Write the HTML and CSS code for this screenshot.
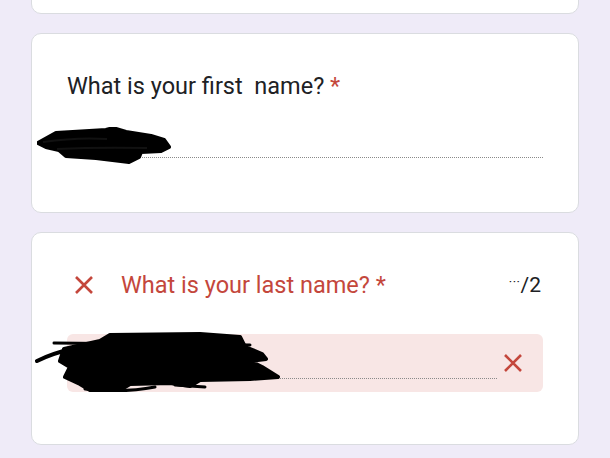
FILE: index.html
```html
<!DOCTYPE html>
<html lang="en">
<head>
  <meta charset="UTF-8" />
  <meta name="viewport" content="width=device-width, initial-scale=1.0" />
  <title>Form</title>
  <link rel="stylesheet" href="styles.css">
</head>

<body>

  <div class="form">
    <div class="card card-cut"></div>

    <div class="card">
      <div class="question">
        <h2>What is your first&nbsp; name? <span class="req">*</span></h2>
      </div>
      <div class="answer">
        <div class="line"></div>
      </div>
      <svg class="scribble scribble-first" width="136" height="38" viewBox="0 0 136 38">
        <path d="M1 16 L19 6 L69 3 L76 1 L89 5 L114 9 L127 13 L132 20 L124 24 L104 25 L102 30 L92 35 L59 31 L29 29 L22 23 L9 20 Z" fill="#000" stroke="#000" stroke-width="4" stroke-linejoin="round"/>
        <path d="M6 15 Q40 10 70 12 M20 22 Q60 20 110 21" stroke="#111" stroke-width="2" fill="none"/>
      </svg>
    </div>

    <div class="card">
      <div class="question error">
        <svg class="icon-x" width="20" height="20" viewBox="0 0 20 20">
          <path d="M2 2 L18 18 M18 2 L2 18" stroke="#c4473c" stroke-width="2.6" fill="none"/>
        </svg>
        <h2>What is your last name? *</h2>
        <span class="score"><span class="dots">···</span>/2</span>
      </div>
      <div class="answer answer-error">
        <div class="line"></div>
        <svg class="icon-x small" width="20" height="20" viewBox="0 0 20 20">
          <path d="M2 2 L18 18 M18 2 L2 18" stroke="#c4473c" stroke-width="2.6" fill="none"/>
        </svg>
      </div>
      <svg class="scribble scribble-last" width="246" height="64" viewBox="0 0 246 64">
        <path d="M29 20 L65 12 L75 6 L165 5 L205 8 L210 18 L227 25 L231 30 L215 32 L227 38 L243 48 L215 50 L165 51 L155 57 L135 54 L95 55 L85 61 L55 61 L45 55 L30 48 L35 38 L25 32 Z" fill="#000" stroke="#000" stroke-width="4" stroke-linejoin="round"/>
        <path d="M2 32 Q18 24 34 21" stroke="#000" stroke-width="4" stroke-linecap="round" fill="none"/>
        <path d="M19 14 L215 16" stroke="#000" stroke-width="3" stroke-linecap="round" fill="none"/>
        <path d="M50 60 Q90 64 120 58 M140 56 L170 58" stroke="#000" stroke-width="3" stroke-linecap="round" fill="none"/>
      </svg>
    </div>
  </div>

</body>
</html>
```

FILE: styles.css
```css
* {
  margin: 0;
  padding: 0;
  box-sizing: border-box;
}

body {
  background-color: #efebf8;
  font-family: Roboto, 'Noto Sans', sans-serif;
  color: #202124;
  overflow: hidden;
}

.form {
  display: flex;
  flex-direction: column;
  gap: 19px;
  padding: 0 31px;
}

.card {
  position: relative;
  background-color: #fff;
  border: 1px solid #dadce0;
  border-radius: 10px;
  padding: 38px 35px 54px;
}

.card-cut {
  height: 40px;
  margin-top: -26px;
  padding: 0;
}

.question {
  display: flex;
  align-items: center;
  height: 28px;
}

h2 {
  font-size: 23.5px;
  font-weight: 400;
  line-height: 28px;
}

.req {
  color: #c4473c;
}

.error {
  color: #c4473c;
}

.error .icon-x {
  margin: 0 27px 0 7px;
}

.score {
  margin-left: auto;
  margin-right: 2px;
  font-size: 21px;
  color: #202124;
}

.dots {
  font-size: 13px;
  letter-spacing: 0.5px;
  vertical-align: 6px;
  line-height: 0;
}

.answer {
  display: flex;
  align-items: center;
  margin-top: 25px;
  height: 33px;
}

.line {
  flex: 1;
  height: 33px;
  border-bottom: 1px dotted #8a8a8a;
}

.answer-error {
  margin-top: 35px;
  height: 58px;
  padding-right: 20px;
  background-color: #f8e6e5;
  border-radius: 6px;
}

.answer-error .line {
  align-self: flex-start;
  height: 45px;
}

.icon-x.small {
  margin-left: 6px;
}

.card:last-child {
  padding-bottom: 52px;
}

.scribble {
  position: absolute;
}

.scribble-first {
  left: 5px;
  top: 93px;
}

.scribble-last {
  left: 3px;
  top: 96px;
}
```
